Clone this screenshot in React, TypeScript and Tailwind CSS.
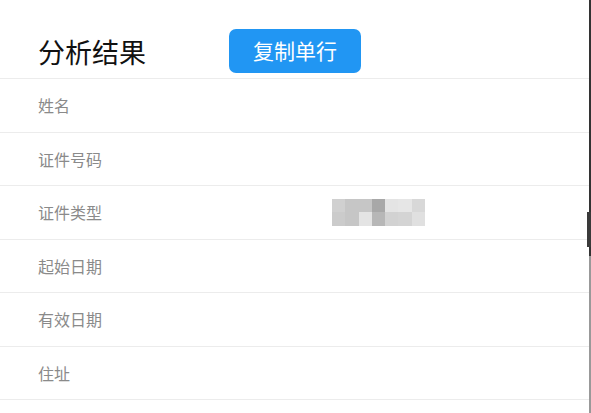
const rows = ['姓名', '证件号码', '证件类型', '起始日期', '有效日期', '住址', ''];

// 打码区域的色块（两行七列）
const mosaic = [
  '#d0d0d0', '#c6c6c6', '#c6c6c6', '#a8a8a8', '#e4e4e4', '#e6e6e6', '#d8d8d8',
  '#cbcbcb', '#c6c6c6', '#e4e4e4', '#b7b7b7', '#d2d2d2', '#d4d4d4', '#e0e0e0',
];

function Mosaic() {
  return (
    <div className="grid grid-cols-7 grid-rows-2 w-[93px] h-[27px]">
      {mosaic.map((c, i) => (
        <div key={i} style={{ backgroundColor: c }} />
      ))}
    </div>
  );
}

export default function App() {
  return (
    <div
      className="relative flex w-full h-screen overflow-hidden bg-white"
      style={{ fontFamily: '"Noto Sans CJK SC", "Noto Sans", sans-serif' }}
    >
      <div className="flex-1 flex flex-col">
        {/* 标题栏 */}
        <div className="h-[79px] shrink-0 flex items-start pt-[29px] pl-[38px] border-b border-[#ececec]">
          <div className="w-[191px] h-[44px] flex items-center pt-[3px] text-[27px] text-[#111]">
            分析结果
          </div>
          <button className="w-[132px] h-[44px] rounded-[7px] bg-[#2196f3] text-white text-[21px] flex items-center justify-center">
            复制单行
          </button>
        </div>

        {/* 结果列表 */}
        {rows.map((label, i) => (
          <div
            key={i}
            className="h-[53.5px] shrink-0 flex items-center pl-[38px] border-b border-[#ececec]"
          >
            <div className="w-[294px] text-[16px] text-[#8a8a8a]">{label}</div>
            {label === '证件类型' && <Mosaic />}
          </div>
        ))}
      </div>

      {/* 右侧滚动条 */}
      <div className="w-[2px] flex flex-col">
        <div className="h-[256px] bg-[#333]" />
        <div className="flex-1 bg-[#999]" />
      </div>
      <div className="absolute right-0 top-[212px] w-[4px] h-[35px] bg-[#3a3a3a]" />
    </div>
  );
}
